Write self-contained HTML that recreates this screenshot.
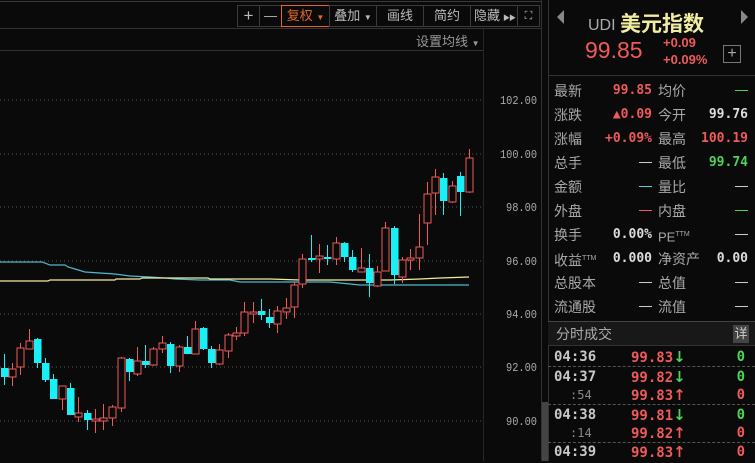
<!DOCTYPE html>
<html><head><meta charset="utf-8"><style>
*{margin:0;padding:0;box-sizing:border-box}
body{width:755px;height:461px;background:#0a0a0a;overflow:hidden;position:relative;font-family:"Liberation Sans","Noto Sans CJK SC",sans-serif;color:#c8c8c8}
.abs{position:absolute}
.tb{position:absolute;top:5px;height:22px;border:1px solid #3c3c3c;color:#bbb;font-size:13px;line-height:20px;text-align:center;white-space:nowrap;overflow:hidden}
.row{position:absolute;left:548px;width:207px;height:24px;font-size:14px;line-height:24px}
.row span{position:absolute}
.l1{left:6px;color:#a8a8a8}.v1{right:103px;text-align:right;font-family:"DejaVu Sans Mono",monospace;font-weight:bold;font-size:13px}
.l2{left:110px;color:#a8a8a8}.v2{right:7px;text-align:right;font-family:"DejaVu Sans Mono",monospace;font-weight:bold;font-size:13px}
.r{color:#f05a5a}.g{color:#4ed35a}.w{color:#ddd}.dash{display:inline-block;width:13px;height:1px;vertical-align:middle}
.tr{position:absolute;left:548px;width:207px;height:19px;font-family:"DejaVu Sans Mono",monospace;font-weight:bold;font-size:14px;line-height:19px}
.tr .t{position:absolute;left:6px;color:#c8c8c8}
.tr .p{position:absolute;left:83px;color:#f05a5a}
.tr .q{position:absolute;right:10px}
.tr.sep{border-bottom:1px dashed #555}
.ar{font-family:"DejaVu Sans",sans-serif;font-size:15px;font-weight:bold}
</style></head><body>
<div class="abs" style="left:0;top:1px;width:541px;height:1px;background:#3a3a3a"></div>
<div class="abs" style="left:0;top:28px;width:541px;height:1px;background:#333"></div>
<div class="abs" style="left:0;top:50px;width:483px;height:1px;background:#333"></div>
<div class="abs" style="left:483px;top:28px;width:1px;height:433px;background:#262626"></div>
<div class="abs" style="left:541px;top:0;width:1px;height:461px;background:#333"></div>
<div class="abs" style="left:542px;top:402px;width:6px;height:59px;background:#444"></div>
<div class="abs" style="left:548px;top:0;width:1px;height:461px;background:#333"></div>

<div class="tb" style="left:237px;width:23px;font-size:17px">+</div>
<div class="tb" style="left:259px;width:23px">—</div>
<div class="tb" style="left:281px;width:49px;border-color:#e2672c;color:#e2672c">复权 <span style="font-size:8px">▼</span></div>
<div class="tb" style="left:329px;width:48px">叠加 <span style="font-size:8px">▼</span></div>
<div class="tb" style="left:376px;width:48px">画线</div>
<div class="tb" style="left:423px;width:48px">简约</div>
<div class="tb" style="left:470px;width:48px;text-align:left;padding-left:3px">隐藏<span style="font-size:7px;letter-spacing:-1px;margin-left:3px">▶▶</span></div>
<div class="tb" style="left:517px;width:23px;font-size:11px">⛶</div>
<div class="abs" style="left:416px;top:31px;font-size:13px;color:#999">设置均线 <span style="font-size:8px">▼</span></div>

<svg class="abs" style="left:0;top:0" width="541" height="461">
<g stroke="#555" stroke-dasharray="1,3">
<line x1="0" y1="100" x2="483" y2="100"/><line x1="0" y1="154" x2="483" y2="154"/><line x1="0" y1="207" x2="483" y2="207"/><line x1="0" y1="261" x2="483" y2="261"/><line x1="0" y1="314" x2="483" y2="314"/><line x1="0" y1="367" x2="483" y2="367"/><line x1="0" y1="421" x2="483" y2="421"/>
</g>
<g fill="#aaa" font-family="Liberation Mono,monospace" font-size="12">
<text x="500" y="104" textLength="37" lengthAdjust="spacingAndGlyphs">102.00</text><text x="500" y="158" textLength="37" lengthAdjust="spacingAndGlyphs">100.00</text><text x="506" y="211" textLength="31" lengthAdjust="spacingAndGlyphs">98.00</text><text x="506" y="265" textLength="31" lengthAdjust="spacingAndGlyphs">96.00</text><text x="506" y="318" textLength="31" lengthAdjust="spacingAndGlyphs">94.00</text><text x="506" y="371" textLength="31" lengthAdjust="spacingAndGlyphs">92.00</text><text x="506" y="425" textLength="31" lengthAdjust="spacingAndGlyphs">90.00</text>
</g>
<polyline fill="none" stroke="#4fb7cc" stroke-width="1.2" points="0,262 42,262 50,265 65,265 68,267 75,269 85,272 100,273 115,274 130,276 150,277 165,278 175,279 200,280 230,280 240,282 290,282 330,282 360,285 469,285"/>
<polyline fill="none" stroke="#f2eca0" stroke-width="1.2" points="0,281 48,281 50,280 115,280 116,279 140,279 142,278 208,278 210,279 270,279 300,280 390,280 420,279 440,278 469,277"/>
<g id="c"></g>
</svg>

<div class="abs" style="left:557px;top:10px;width:0;height:0;border-top:7px solid transparent;border-bottom:7px solid transparent;border-right:7px solid #888"></div>
<div class="abs" style="left:741px;top:10px;width:0;height:0;border-top:7px solid transparent;border-bottom:7px solid transparent;border-left:7px solid #888"></div>
<div class="abs" style="left:588px;top:8px;font-size:16px;color:#aaa">UDI <span style="color:#f2eca0;font-size:21px;font-weight:bold;vertical-align:-1px">美元指数</span></div>
<div class="abs" style="left:585px;top:37px;font-size:23px;color:#f05a5a">99.85</div>
<div class="abs" style="left:663px;top:34px;font-size:13px;color:#f05a5a;font-weight:bold;line-height:17px">+0.09<br>+0.09%</div>
<div class="abs" style="left:723px;top:45px;width:18px;height:18px;border:1px solid #777;color:#aaa;font-size:16px;line-height:15px;text-align:center">+</div>
<div class="abs" style="left:548px;top:75px;width:207px;height:1px;background:#333"></div>

<div class="row" style="top:79px"><span class="l1">最新</span><span class="v1 r">99.85</span><span class="l2">均价</span><span class="v2"><i class="dash" style="background:#4ed35a"></i></span></div>
<div class="row" style="top:103px"><span class="l1">涨跌</span><span class="v1 r">▲0.09</span><span class="l2">今开</span><span class="v2 w">99.76</span></div>
<div class="row" style="top:127px"><span class="l1">涨幅</span><span class="v1 r">+0.09%</span><span class="l2">最高</span><span class="v2 r">100.19</span></div>
<div class="row" style="top:151px"><span class="l1">总手</span><span class="v1"><i class="dash" style="background:#ccc"></i></span><span class="l2">最低</span><span class="v2 g">99.74</span></div>
<div class="row" style="top:175px"><span class="l1">金额</span><span class="v1"><i class="dash" style="background:#4fd0e0"></i></span><span class="l2">量比</span><span class="v2"><i class="dash" style="background:#ccc"></i></span></div>
<div class="row" style="top:199px"><span class="l1">外盘</span><span class="v1"><i class="dash" style="background:#f05a5a"></i></span><span class="l2">内盘</span><span class="v2"><i class="dash" style="background:#4ed35a"></i></span></div>
<div class="row" style="top:223px"><span class="l1">换手</span><span class="v1 w">0.00%</span><span class="l2" style="font-size:13px">PE<sup style="font-size:7px">TTM</sup></span><span class="v2"><i class="dash" style="background:#ccc"></i></span></div>
<div class="row" style="top:247px"><span class="l1">收益<sup style="font-size:7px">TTM</sup></span><span class="v1 w">0.000</span><span class="l2">净资产</span><span class="v2 w">0.00</span></div>
<div class="row" style="top:271px"><span class="l1">总股本</span><span class="v1"><i class="dash" style="background:#ccc"></i></span><span class="l2">总值</span><span class="v2"><i class="dash" style="background:#ccc"></i></span></div>
<div class="row" style="top:295px"><span class="l1">流通股</span><span class="v1"><i class="dash" style="background:#ccc"></i></span><span class="l2">流值</span><span class="v2"><i class="dash" style="background:#ccc"></i></span></div>

<div class="abs" style="left:548px;top:321px;width:207px;height:1px;background:#444"></div>
<div class="abs" style="left:548px;top:322px;width:207px;height:24px;background:#181818;border-bottom:1px solid #333"></div>
<div class="abs" style="left:556px;top:324px;font-size:14px;color:#aaa">分时成交</div>
<div class="abs" style="left:733px;top:325px;width:16px;height:18px;background:#444;color:#ccc;font-size:13px;line-height:18px;text-align:center">详</div>

<div class="tr sep" style="top:348px"><span class="t">04:36</span><span class="p">99.83<span class="g ar">↓</span></span><span class="q g">0</span></div>
<div class="tr" style="top:368px"><span class="t">04:37</span><span class="p">99.82<span class="g ar">↓</span></span><span class="q g">0</span></div>
<div class="tr sep" style="top:386px"><span class="t" style="color:#888;font-weight:normal;font-size:12px;left:22px">:54</span><span class="p">99.83<span class="r ar">↑</span></span><span class="q r">0</span></div>
<div class="tr" style="top:406px"><span class="t">04:38</span><span class="p">99.81<span class="g ar">↓</span></span><span class="q g">0</span></div>
<div class="tr sep" style="top:424px"><span class="t" style="color:#888;font-weight:normal;font-size:12px;left:22px">:14</span><span class="p">99.82<span class="r ar">↑</span></span><span class="q r">0</span></div>
<div class="tr" style="top:443px"><span class="t">04:39</span><span class="p">99.83<span class="r ar">↑</span></span><span class="q r">0</span></div>

<script>
var d=[[4,'c',368,377,354,385],[12,'r',369,377,363,386],[20,'r',348,367,343,375],[29,'r',341,349,329,349],[37,'c',339,363,338,368],[45,'c',363,380,358,382],[53,'c',379,399,374,399],[62,'r',386,399,386,410],[70,'c',388,415,383,415],[78,'r',413,417,397,422],[87,'c',413,420,410,430],[95,'r',419,421,409,433],[103,'r',418,421,404,430],[112,'r',407,418,405,426],[121,'r',358,408,357,412],[129,'c',359,372,358,381],[137,'r',361,374,347,376],[145,'c',361,365,345,368],[153,'r',349,365,347,366],[162,'r',343,349,336,353],[170,'c',344,366,342,373],[179,'r',347,366,345,372],[187,'c',347,354,336,354],[195,'r',329,354,321,354],[203,'c',328,349,327,350],[211,'c',349,363,346,368],[219,'r',350,364,344,365],[228,'r',335,351,333,358],[236,'r',333,336,327,340],[244,'r',312,333,302,336],[253,'r',312,314,302,323],[261,'c',311,315,299,320],[269,'c',317,323,309,328],[277,'r',311,324,306,333],[286,'r',308,312,298,319],[294,'r',285,307,282,318],[302,'r',259,284,254,288],[311,'c',258,260,235,262],[319,'r',256,259,244,273],[327,'c',257,259,245,265],[336,'r',243,259,237,265],[344,'c',243,257,242,262],[352,'c',257,270,250,272],[361,'r',268,272,248,272],[369,'c',268,283,254,297],[377,'r',272,286,266,287],[385,'r',228,271,222,271],[394,'c',228,275,226,284],[402,'r',260,277,257,283],[410,'r',258,260,249,270],[419,'r',247,258,214,270],[427,'r',194,223,182,245],[435,'r',177,193,169,215],[443,'c',178,201,173,215],[452,'r',186,202,181,203],[460,'c',176,192,172,216],[469,'r',158,192,149,193]];
var s='';d.forEach(function(k){var x=k[0],col=k[1]=='r'?'#f05a5a':'#19f0f5',h=Math.max(k[3]-k[2],1.5);
s+='<line x1="'+(x+0.5)+'" y1="'+k[4]+'" x2="'+(x+0.5)+'" y2="'+k[5]+'" stroke="'+col+'"/>';
if(k[1]=='r')s+='<rect x="'+(x-3)+'" y="'+k[2]+'" width="7" height="'+h+'" fill="#0a0a0a" stroke="'+col+'"/>';
else s+='<rect x="'+(x-3)+'" y="'+k[2]+'" width="7.5" height="'+h+'" fill="'+col+'"/>';});
document.getElementById('c').innerHTML=s;
</script>
</body></html>
